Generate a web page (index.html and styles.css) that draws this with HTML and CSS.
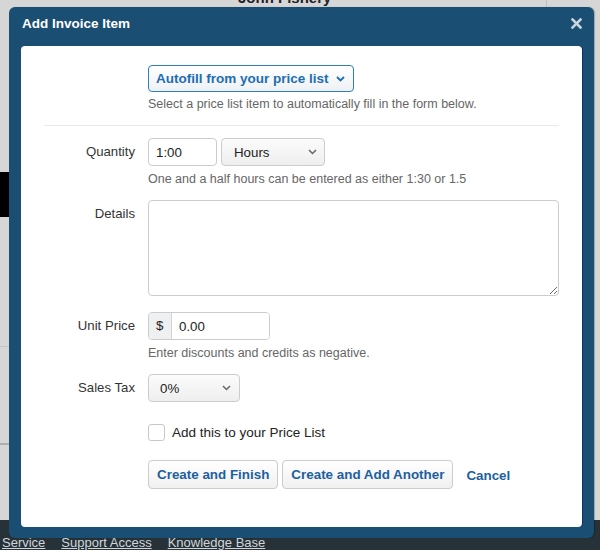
FILE: index.html
```html
<!DOCTYPE html>
<html lang="en">
<head>
<meta charset="utf-8">
<title>Add Invoice Item</title>
<link rel="stylesheet" href="styles.css">
</head>
<body>
<div class="page">
  <div class="topbar">
    <span class="owner">John Fishery</span>
    <span class="topline"></span>
  </div>
  <div class="backdrop">
    <div class="strip">
      <div class="strip-black"></div>
      <div class="strip-line"></div>
      <div class="strip-line dark"></div>
    </div>
  </div>
  <footer class="footer">
    <a href="#">Service</a>
    <a href="#">Support Access</a>
    <a href="#">Knowledge Base</a>
  </footer>
</div>

<div class="modal">
  <div class="modal-head">
    <span class="modal-title">Add Invoice Item</span>
    <svg class="close" width="11" height="11" viewBox="0 0 11 11"><path d="M1.5 1.5 L9.5 9.5 M9.5 1.5 L1.5 9.5" stroke="#c9d4de" stroke-width="2.6" stroke-linecap="square"/></svg>
  </div>
  <div class="panel">
    <div class="row">
      <div></div>
      <div>
        <button class="autofill" type="button">Autofill from your price list
          <svg width="9" height="6" viewBox="0 0 9 6"><path d="M1 1 L4.5 4.5 L8 1" fill="none" stroke="#1f6db3" stroke-width="1.8"/></svg>
        </button>
        <div class="help">Select a price list item to automatically fill in the form below.</div>
      </div>
    </div>
    <div class="divider"></div>

    <div class="row">
      <div class="label">Quantity</div>
      <div>
        <div class="inline">
          <input class="input qty" type="text" value="1:00">
          <div class="select hours"><span>Hours</span>
            <svg width="9" height="6" viewBox="0 0 9 6"><path d="M1 1 L4.5 4.5 L8 1" fill="none" stroke="#666" stroke-width="1.5"/></svg>
          </div>
        </div>
        <div class="help">One and a half hours can be entered as either 1:30 or 1.5</div>
      </div>
    </div>

    <div class="row details">
      <div class="label">Details</div>
      <div><textarea class="textarea"></textarea></div>
    </div>

    <div class="row price">
      <div class="label">Unit Price</div>
      <div>
        <div class="group">
          <span class="addon">$</span>
          <input class="group-input" type="text" value="0.00">
        </div>
        <div class="help">Enter discounts and credits as negative.</div>
      </div>
    </div>

    <div class="row tax">
      <div class="label">Sales Tax</div>
      <div>
        <div class="select taxsel"><span>0%</span>
          <svg width="9" height="6" viewBox="0 0 9 6"><path d="M1 1 L4.5 4.5 L8 1" fill="none" stroke="#666" stroke-width="1.5"/></svg>
        </div>
      </div>
    </div>

    <div class="row check">
      <div></div>
      <label class="checkline"><span class="box"></span><span>Add this to your Price List</span></label>
    </div>

    <div class="row actions">
      <div></div>
      <div class="buttons">
        <button class="btn" type="button">Create and Finish</button>
        <button class="btn" type="button">Create and Add Another</button>
        <a class="cancel" href="#">Cancel</a>
      </div>
    </div>
  </div>
</div>
</body>
</html>
```

FILE: styles.css
```css
html, body {
  margin: 0;
  padding: 0;
}
body {
  width: 600px;
  height: 550px;
  overflow: hidden;
  background: #d6d6d6;
  font-family: "Liberation Sans", Arial, sans-serif;
  position: relative;
}
.page {
  height: 550px;
  display: flex;
  flex-direction: column;
}
.topbar {
  height: 8px;
  display: flex;
  align-items: flex-start;
  overflow: hidden;
}
.owner {
  margin-left: 238px;
  margin-top: -11px;
  font-size: 15px;
  font-weight: bold;
  color: #222;
  line-height: 17px;
}
.topline {
  margin-left: auto;
  margin-right: 53px;
  width: 1px;
  height: 8px;
  background: #bdbdbd;
}
.backdrop {
  flex: 1;
  display: flex;
}
.strip {
  width: 9px;
  display: flex;
  flex-direction: column;
}
.strip-black {
  margin-top: 164px;
  height: 45px;
  background: #000;
}
.strip-line {
  margin-top: 129px;
  height: 1px;
  background: #c4c4c4;
}
.strip-line.dark {
  margin-top: 96px;
  background: #b0b0b0;
  height: 2px;
}
.footer {
  height: 30px;
  box-sizing: border-box;
  background: #263238;
  padding: 15px 0 0 2px;
  display: flex;
  gap: 16px;
}
.footer a {
  color: #d0d5da;
  font-size: 13px;
  line-height: 15px;
  text-decoration: underline;
}

/* modal */
.modal {
  position: absolute;
  left: 9px;
  top: 7px;
  width: 585px;
  height: 531px;
  background: #1a4e72;
  border-radius: 6px;
  box-shadow: 1px 0 1px rgba(0, 0, 0, 0.25);
  display: flex;
  flex-direction: column;
  box-sizing: border-box;
  padding: 0 12px 11px 12px;
}
.modal-head {
  height: 39px;
  display: flex;
  align-items: center;
  justify-content: space-between;
  padding: 0 0 7px 1px;
  box-sizing: border-box;
}
.modal-title {
  color: #fff;
  font-size: 13.5px;
  font-weight: bold;
}
.close {
  margin-right: 0;
}
.panel {
  flex: 1;
  background: #fff;
  border-radius: 4px;
  padding: 19px 23px 0 23px;
  box-shadow: 1px 0 0 #0f2f66;
}
.row {
  display: grid;
  grid-template-columns: 91px 1fr;
  column-gap: 13px;
}
.label {
  text-align: right;
  font-size: 13.2px;
  line-height: 28px;
  color: #333;
}
.autofill {
  display: inline-flex;
  align-items: center;
  gap: 7px;
  width: 206px;
  height: 27px;
  box-sizing: border-box;
  padding: 0 0 0 7px;
  border: 1px solid #2f7dc4;
  border-radius: 4px;
  background: linear-gradient(#ffffff, #eef1f4);
  color: #1f6db3;
  font-family: "Liberation Sans", Arial, sans-serif;
  font-weight: bold;
  font-size: 13.5px;
}
.help {
  margin-top: 5px;
  font-size: 12.5px;
  line-height: 15px;
  color: #666666;
}
.divider {
  margin: 13px 0 12px;
  border-top: 1px solid #e9e9e9;
}
.inline {
  display: flex;
  gap: 4px;
}
.input, .textarea, .group-input {
  font-family: "Liberation Sans", Arial, sans-serif;
  font-size: 13.3px;
  color: #222;
}
.input {
  box-sizing: border-box;
  height: 28px;
  border: 1px solid #cccccc;
  border-radius: 4px;
  padding: 0 7px;
  outline: none;
}
.qty {
  width: 69px;
}
.select {
  box-sizing: border-box;
  height: 28px;
  border: 1px solid #cccccc;
  border-radius: 4px;
  background: linear-gradient(#fbfbfb, #eeeeee);
  display: flex;
  align-items: center;
  justify-content: space-between;
  font-size: 13.3px;
  color: #222;
}
.hours {
  width: 104px;
  padding: 0 7px 0 12px;
}
.row .inline + .help {
  margin-top: 6px;
}
.details {
  margin-top: 13px;
}
.textarea {
  display: block;
  box-sizing: border-box;
  width: 411px;
  height: 96px;
  border: 1px solid #cccccc;
  border-radius: 4px;
  resize: vertical;
  outline: none;
  margin: 0;
}
.price {
  margin-top: 16px;
}
.group {
  display: flex;
  width: 122px;
  height: 28px;
  box-sizing: border-box;
  border: 1px solid #cccccc;
  border-radius: 4px;
  overflow: hidden;
}
.addon {
  width: 23px;
  box-sizing: border-box;
  padding-left: 7px;
  background: #eef0f2;
  border-right: 1px solid #d4d4d4;
  font-size: 13.3px;
  line-height: 26px;
  color: #222;
}
.group-input {
  flex: 1;
  min-width: 0;
  border: 0;
  outline: none;
  padding: 0 7px;
}
.group + .help {
  margin-top: 6px;
}
.tax {
  margin-top: 13px;
}
.taxsel {
  width: 92px;
  padding: 0 8px 0 11px;
}
.check {
  margin-top: 22px;
}
.checkline {
  display: flex;
  align-items: center;
  gap: 7px;
  font-size: 13.5px;
  color: #222;
  height: 17px;
}
.box {
  width: 17px;
  height: 17px;
  box-sizing: border-box;
  border: 1px solid #c8c8c8;
  border-radius: 3px;
  background: #fff;
}
.actions {
  margin-top: 19px;
}
.buttons {
  display: flex;
  align-items: center;
  gap: 4px;
}
.btn {
  height: 29px;
  box-sizing: border-box;
  padding: 0 8px;
  border: 1px solid #cccccc;
  border-radius: 4px;
  background: linear-gradient(#ffffff, #f0f0f0);
  color: #1d5f9f;
  font-family: "Liberation Sans", Arial, sans-serif;
  font-weight: bold;
  font-size: 13.4px;
}
.cancel {
  margin-left: 9px;
  margin-top: 2px;
  color: #1d5f9f;
  font-weight: bold;
  font-size: 13.4px;
  text-decoration: none;
}
```
